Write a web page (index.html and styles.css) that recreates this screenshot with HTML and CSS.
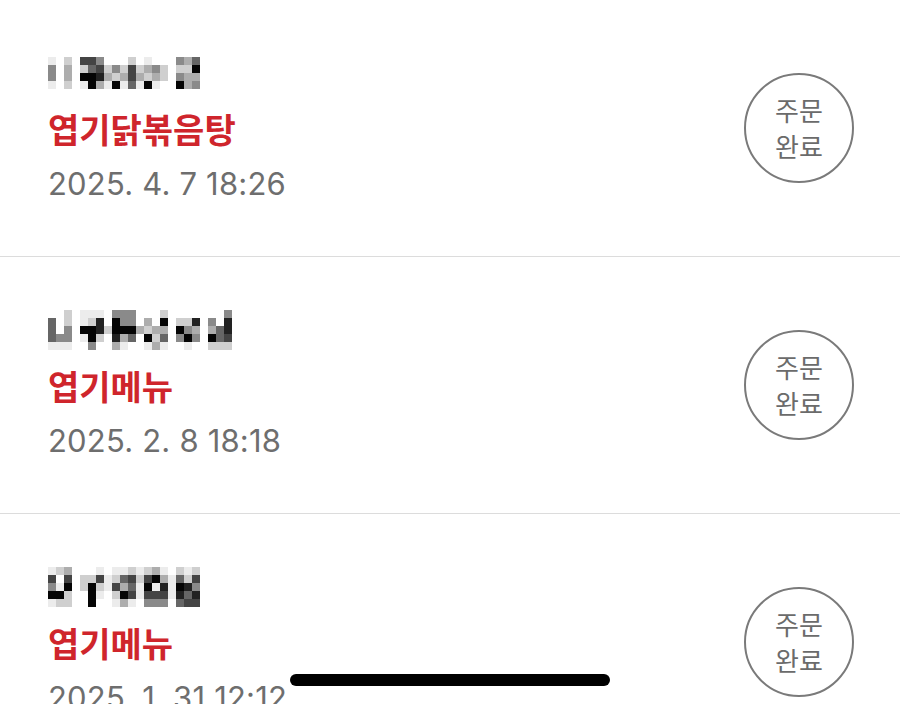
FILE: index.html
```html
<!DOCTYPE html>
<html lang="ko">
<head>
<meta charset="utf-8">
<title>주문 내역</title>
<link rel="stylesheet" href="styles.css">
</head>
<body>
<ul class="orders">
  <li class="order">
    <div class="info">
      <div class="store"><svg class="mosaic" data-grid="1020664000201000435|4030256242623420228|4030887323632320433|1020183181518100834"></svg></div>
      <div class="menu">엽기닭볶음탕</div>
      <div class="date">2025. 4. 7 18:26</div>
    </div>
    <div class="status">주문<br>완료</div>
  </li>
  <li class="order">
    <div class="info">
      <div class="store"><svg class="mosaic" data-grid="002011104440002000000040|502012708440308022704070|504088728883233084303570|544018207350825048408560|111004003100131001002220"></svg></div>
      <div class="menu">엽기메뉴</div>
      <div class="date">2025. 2. 8 18:18</div>
    </div>
    <div class="status">주문<br>완료</div>
  </li>
  <li class="order">
    <div class="info">
      <div class="store"><svg class="mosaic" data-grid="1230001011212310212|6060226125626831526|4180282163518171874|8820081028616661757|1220080013104440566"></svg></div>
      <div class="menu">엽기메뉴</div>
      <div class="date">2025. 1. 31 12:12</div>
    </div>
    <div class="status">주문<br>완료</div>
  </li>
</ul>
<div class="home-indicator"></div>
<script src="mosaic.js"></script>
</body>
</html>
```
FILE: styles.css
```css
html, body {
  margin: 0;
  padding: 0;
  background: #ffffff;
  height: 704px;
  overflow: hidden;
}
body {
  font-family: Inter, "Noto Sans CJK KR", sans-serif;
}
.orders {
  list-style: none;
  margin: 0;
  padding: 0;
}
.order {
  display: flex;
  align-items: center;
  justify-content: space-between;
  height: 256px;
  padding: 0 46px 0 48px;
  border-bottom: 1px solid #dcdcdc;
}
.info {
  display: flex;
  flex-direction: column;
}
.store {
  height: 55px;
  display: flex;
  align-items: center;
}
.mosaic {
  display: block;
}
.menu {
  height: 55px;
  line-height: 55px;
  font-family: "Noto Sans CJK KR", sans-serif;
  font-weight: 700;
  font-size: 34px;
  color: #cf252c;
}
.date {
  height: 55px;
  line-height: 55px;
  font-size: 31px;
  color: #6e6e6e;
  letter-spacing: 0.2px;
}
.status {
  width: 106px;
  height: 106px;
  border: 2px solid #7a7a7a;
  border-radius: 50%;
  display: flex;
  align-items: center;
  justify-content: center;
  text-align: center;
  font-family: "Noto Sans CJK KR", sans-serif;
  font-size: 26px;
  line-height: 36px;
  color: #6b6b6b;
}
.home-indicator {
  position: fixed;
  left: 290px;
  bottom: 18px;
  width: 320px;
  height: 12px;
  border-radius: 6px;
  background: #000000;
}
```
FILE: mosaic.js
```js
(function () {
  var shades = ["#ffffff", "#ececec", "#cfcfcf", "#adadad", "#8a8a8a", "#666666", "#444444", "#222222", "#050505"];
  var NS = "http://www.w3.org/2000/svg";
  var cell = 8;
  document.querySelectorAll(".mosaic").forEach(function (svg) {
    var rows = svg.getAttribute("data-grid").split("|");
    var cols = rows[0].length;
    svg.setAttribute("width", cols * cell);
    svg.setAttribute("height", rows.length * cell);
    rows.forEach(function (row, r) {
      for (var c = 0; c < row.length; c++) {
        var v = parseInt(row[c], 10);
        if (!v) continue;
        var rect = document.createElementNS(NS, "rect");
        rect.setAttribute("x", c * cell);
        rect.setAttribute("y", r * cell);
        rect.setAttribute("width", cell);
        rect.setAttribute("height", cell);
        rect.setAttribute("fill", shades[v]);
        svg.appendChild(rect);
      }
    });
  });
})();
```
